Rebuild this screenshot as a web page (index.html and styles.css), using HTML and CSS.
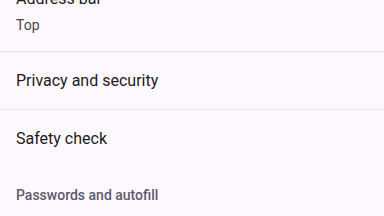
FILE: index.html
```html
<!DOCTYPE html>
<html>
<head>
<meta charset="utf-8">
<link rel="stylesheet" href="styles.css">
</head>
<body>
<div class="list">
  <div class="item first">
    <div class="title">Address bar</div>
    <div class="summary">Top</div>
  </div>
  <div class="divider"></div>
  <div class="item single">
    <div class="title">Privacy and security</div>
  </div>
  <div class="divider"></div>
  <div class="item single">
    <div class="title">Safety check</div>
  </div>
  <div class="header">Passwords and autofill</div>
</div>
</body>
</html>
```
FILE: styles.css
```css
html, body {
  margin: 0;
  padding: 0;
  background: #fdf8fd;
  width: 384px;
  height: 216px;
  overflow: hidden;
  font-family: Roboto, "Noto Sans", sans-serif;
}
.list {
  display: flex;
  flex-direction: column;
}
.item {
  padding: 16px;
  display: flex;
  flex-direction: column;
}
.item.first {
  margin-top: -29px;
}
.item.single {
  padding: 16.5px 16px;
}
.title {
  font-size: 16px;
  line-height: 24px;
  color: #1d1b20;
}
.summary {
  font-size: 14px;
  line-height: 20px;
  margin-top: 4px;
  color: #49454f;
}
.divider {
  height: 1px;
  background: #e8e3e9;
}
.header {
  padding: 18px 16px 0;
  font-size: 14px;
  line-height: 20px;
  font-weight: 500;
  color: #5d5a6b;
}
```
